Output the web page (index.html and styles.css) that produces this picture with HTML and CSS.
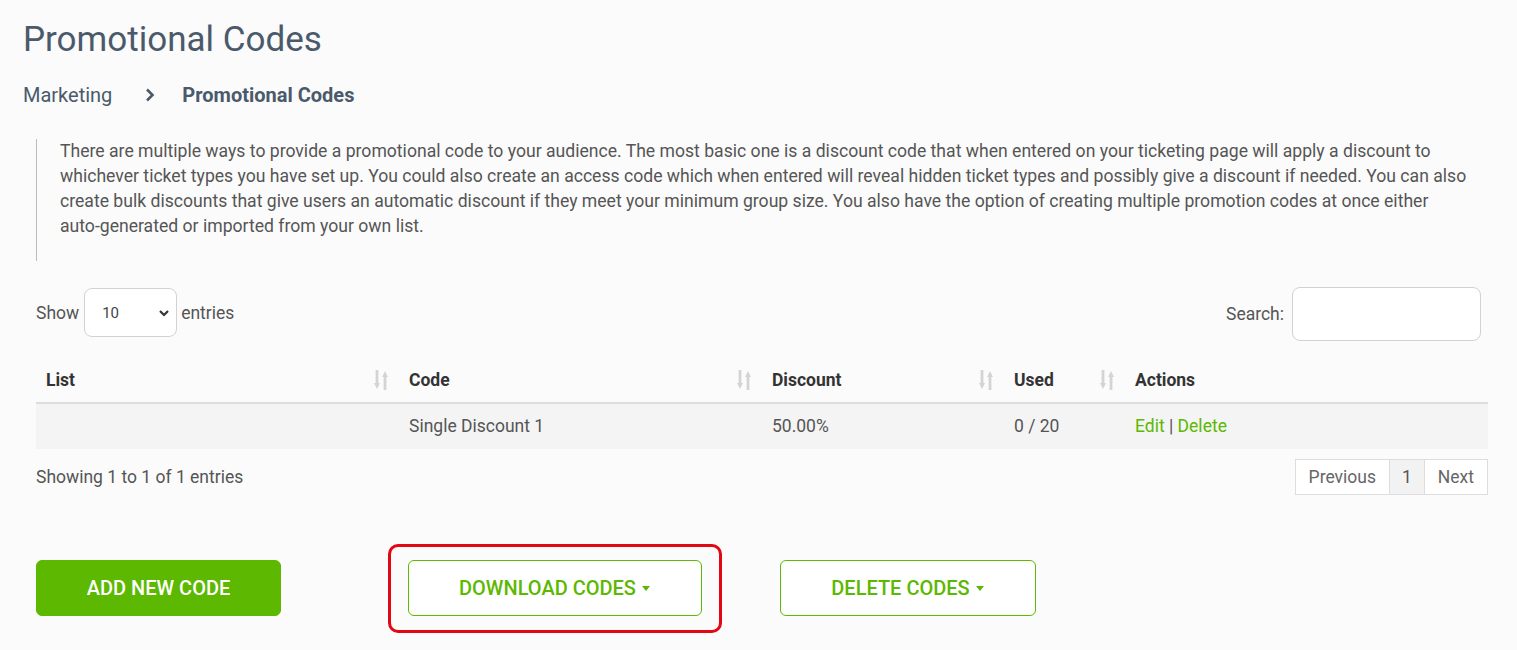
FILE: index.html
```html
<!DOCTYPE html>
<html>
<head>
<meta charset="utf-8">
<link rel="stylesheet" href="styles.css">
</head>
<body>
<div class="page">
  <h1 class="title">Promotional Codes</h1>
  <div class="crumbs">
    <span class="crumb">Marketing</span>
    <svg class="chev" width="12" height="16" viewBox="0 0 12 16"><path d="M3 2.5 L8.5 8 L3 13.5" fill="none" stroke="#4a5a6b" stroke-width="2.6"/></svg>
    <span class="crumb current">Promotional Codes</span>
  </div>
  <div class="content">
    <blockquote class="intro">There are multiple ways to provide a promotional code to your audience. The most basic one is a discount code that when entered on your ticketing page will apply a discount to whichever ticket types you have set up. You could also create an access code which when entered will reveal hidden ticket types and possibly give a discount if needed. You can also create bulk discounts that give users an automatic discount if they meet your minimum group size. You also have the option of creating multiple promotion codes at once either auto-generated or imported from your own list.</blockquote>

    <div class="controls">
      <div class="length">
        <span>Show</span>
        <div class="select"><span>10</span>
          <svg width="12" height="8" viewBox="0 0 12 8"><path d="M2 2 L6 6 L10 2" fill="none" stroke="#333" stroke-width="2.2"/></svg>
        </div>
        <span>entries</span>
      </div>
      <div class="search">
        <span>Search:</span>
        <div class="input"></div>
      </div>
    </div>

    <table class="grid">
      <colgroup>
        <col style="width:363px"><col style="width:363px"><col style="width:242px"><col style="width:121px"><col style="width:363px">
      </colgroup>
      <thead>
        <tr>
          <th><div class="th">List<svg class="sort" width="14" height="20" viewBox="0 0 14 20"><path d="M1.6 0 H4.4 V13 H6 L3 19 L0 13 H1.6 Z M9.6 20 H12.4 V7 H14 L11 1 L8 7 H9.6 Z" fill="#d4d4d4"/></svg></div></th>
          <th><div class="th">Code<svg class="sort" width="14" height="20" viewBox="0 0 14 20"><path d="M1.6 0 H4.4 V13 H6 L3 19 L0 13 H1.6 Z M9.6 20 H12.4 V7 H14 L11 1 L8 7 H9.6 Z" fill="#d4d4d4"/></svg></div></th>
          <th><div class="th">Discount<svg class="sort" width="14" height="20" viewBox="0 0 14 20"><path d="M1.6 0 H4.4 V13 H6 L3 19 L0 13 H1.6 Z M9.6 20 H12.4 V7 H14 L11 1 L8 7 H9.6 Z" fill="#d4d4d4"/></svg></div></th>
          <th><div class="th">Used<svg class="sort" width="14" height="20" viewBox="0 0 14 20"><path d="M1.6 0 H4.4 V13 H6 L3 19 L0 13 H1.6 Z M9.6 20 H12.4 V7 H14 L11 1 L8 7 H9.6 Z" fill="#d4d4d4"/></svg></div></th>
          <th><div class="th">Actions</div></th>
        </tr>
      </thead>
      <tbody>
        <tr>
          <td></td>
          <td>Single Discount 1</td>
          <td>50.00%</td>
          <td>0 / 20</td>
          <td><a class="link">Edit</a> | <a class="link">Delete</a></td>
        </tr>
      </tbody>
    </table>

    <div class="footer-row">
      <span class="info">Showing 1 to 1 of 1 entries</span>
      <div class="pager">
        <span class="pg">Previous</span>
        <span class="pg active">1</span>
        <span class="pg">Next</span>
      </div>
    </div>

    <div class="actions">
      <button class="btn solid">ADD NEW CODE</button>
      <div class="highlight">
        <button class="btn outline wide">DOWNLOAD CODES<span class="caret"></span></button>
      </div>
      <button class="btn outline del">DELETE CODES<span class="caret"></span></button>
    </div>
  </div>
</div>
</body>
</html>
```

FILE: styles.css
```css
* { box-sizing: border-box; }
html, body { margin: 0; padding: 0; background: #fbfbfb; }
body { font-family: Roboto, "Liberation Sans", sans-serif; color: #555; }
.page { padding: 19px 29px 0 23px; }
.title {
  margin: 0;
  font-size: 35px;
  font-weight: 400;
  line-height: 42px;
  color: #4a5a6b;
}
.crumbs {
  margin-top: 22px;
  display: flex;
  align-items: center;
  height: 24px;
  font-size: 20px;
  line-height: 24px;
  color: #4a5a6b;
}
.chev { margin: 0 26px 0 32px; }
.current { font-weight: 700; }
.content { padding-left: 13px; font-size: 17.5px; }
.intro {
  margin: 32px 0 0 0;
  border-left: 1px solid #bbb;
  padding: 0 20px 22px 23px;
  font-size: 17.6px;
  line-height: 25px;
  color: #555;
}
.controls {
  margin-top: 26px;
  display: flex;
  justify-content: space-between;
  align-items: center;
  color: #555;
}
.length { display: flex; align-items: center; margin-top: -3px; }
.select {
  width: 93px;
  height: 49px;
  margin: 0 4px 0 5px;
  border: 1px solid #d2d2d2;
  border-radius: 8px;
  background: #fff;
  display: flex;
  align-items: center;
  justify-content: space-between;
  padding: 0 6px 0 17px;
  font-size: 15px;
  color: #444;
}
.search { display: flex; align-items: center; margin-right: 7px; }
.input {
  width: 189px;
  height: 54px;
  margin-left: 8px;
  border: 1px solid #d2d2d2;
  border-radius: 8px;
  background: #fff;
}
.grid {
  margin-top: 15px;
  width: 1452px;
  border-collapse: collapse;
  table-layout: fixed;
  font-size: 17.5px;
}
.grid th {
  text-align: left;
  padding: 13px 10px 11px 10px;
  border-bottom: 2px solid #ddd;
  font-weight: 700;
  color: #333;
  line-height: 22px;
}
.th { display: flex; justify-content: space-between; align-items: center; }
.sort { margin-right: 1px; }
.grid td {
  padding: 11px 10px;
  line-height: 23px;
  background: #f4f4f4;
  color: #555;
}
.link { color: #5cb800; }
.footer-row {
  margin-top: 10px;
  display: flex;
  justify-content: space-between;
  align-items: center;
}
.info { color: #555; }
.pager { display: flex; border: 1px solid #ddd; background: #fff; }
.pg {
  height: 34px;
  line-height: 34px;
  padding: 0 13px;
  color: #666;
}
.pg + .pg { border-left: 1px solid #ddd; }
.pg.active { background: #f2f2f2; padding: 0 12px; color: #555; }
.actions {
  margin-top: 49px;
  display: flex;
  align-items: center;
}
.btn {
  height: 56px;
  border-radius: 6px;
  font-family: Roboto, "Liberation Sans", sans-serif;
  font-size: 20px;
  font-weight: 500;
  display: flex;
  align-items: center;
  justify-content: center;
  cursor: pointer;
}
.solid {
  width: 245px;
  background: #5cb800;
  border: 1px solid #5cb800;
  color: #fff;
}
.outline {
  background: #fff;
  border: 1px solid #5cb800;
  color: #5cb800;
}
.wide { width: 294px; }
.del { width: 256px; margin-left: 58px; }
.highlight {
  margin-left: 107px;
  border: 3.5px solid #e30613;
  border-radius: 10px;
  padding: 13px 17px 13.5px 16.5px;
}
.caret {
  display: inline-block;
  width: 0; height: 0;
  margin-left: 6px;
  border-left: 4.5px solid transparent;
  border-right: 4.5px solid transparent;
  border-top: 5px solid #5cb800;
}
```
